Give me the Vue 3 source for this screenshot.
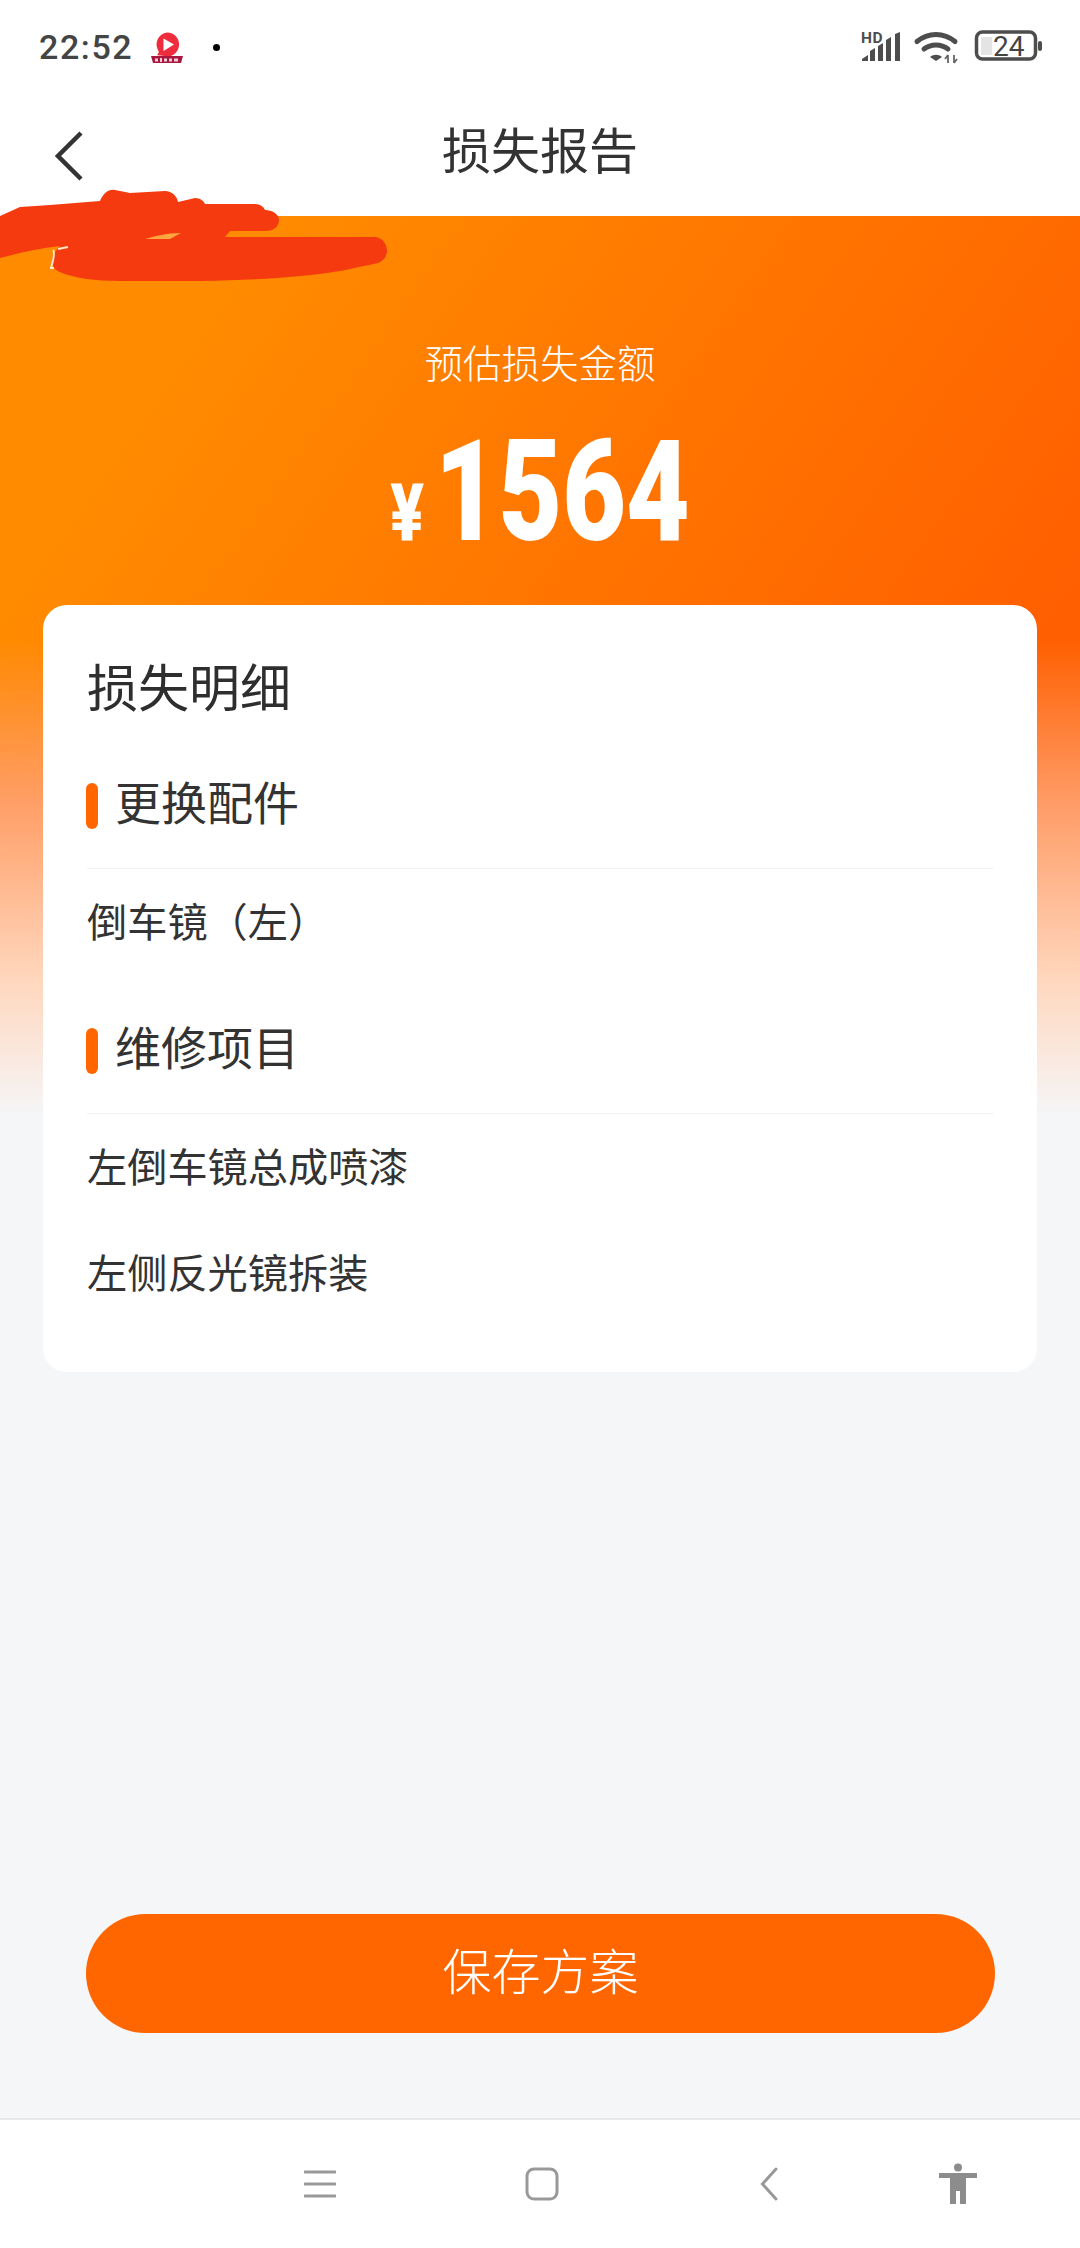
<script setup>
const sections = [
  { title: '更换配件', items: ['倒车镜（左）'] },
  { title: '维修项目', items: ['左倒车镜总成喷漆', '左侧反光镜拆装'] },
]
</script>

<template>
  <div class="page">
    <div class="status">
      <span class="time">22:52</span>
      <svg class="app-logo" width="34" height="32" viewBox="0 0 34 32">
        <path d="M17 0.500a12 12 0 1 1-3 23.600c-2-.5-4.500 0-7-1.100 1.500-1 2-2.500 1.500-4A12 12 0 0 1 17 .5z" fill="#ee2c3c" />
        <path d="M13.500 6.500l10.500 6-10.500 6.500z" fill="#fff" />
        <path d="M1 24h32l-2 7H3z" fill="#a8173f" />
        <path d="M5 26.500h3v3H5zM10 26h2v4h-2zM14 26.500h3v3h-3zM19 26.500h3v3h-3zM24 26.500h4v3h-4z" fill="#f6cdd6" />
      </svg>
      <span class="dot"></span>
      <svg class="status-icons" width="190" height="40" viewBox="0 0 190 40">
        <text x="4" y="13" class="hd">HD</text>
        <path d="M5 31v-2l6-4v6zM13 31V21l5-3v13zM21 31V16l5-3v18zM29 31V10l5-3v24zM38 31V4l5-2v29z" fill="#4d4d4d" />
        <path d="M60 11.500c11-9.500 27-9.500 38 0" fill="none" stroke="#4d4d4d" stroke-width="5" stroke-linecap="round" />
        <path d="M67 19c7-5.500 17-5.500 24 0" fill="none" stroke="#4d4d4d" stroke-width="5" stroke-linecap="round" />
        <path d="M73 27c3.500-3 8.500-3 12 0l-6 4z" fill="#4d4d4d" />
        <path d="M91 33v-8m-3 4l3-4M97 25v8m3-4l-3 4" fill="none" stroke="#666" stroke-width="1.800" />
        <rect x="119.500" y="2" width="59" height="27" rx="6" fill="none" stroke="#4d4d4d" stroke-width="3.500" />
        <rect x="124" y="7" width="11" height="18" fill="#e4e4e4" />
        <rect x="181" y="11" width="4" height="10" rx="2" fill="#4d4d4d" />
        <text x="136" y="26" class="batt">24</text>
      </svg>
    </div>

    <header class="nav-bar">
      <svg class="back" width="30" height="50" viewBox="0 0 30 50">
        <path d="M26 2L3 25l23 23" fill="none" stroke="#333" stroke-width="4.500" />
      </svg>
      <h1 class="title">损失报告</h1>
    </header>

    <main class="main">
      <section class="summary">
        <p class="summary-label">预估损失金额</p>
        <p class="amount"><span class="currency">¥</span><span class="value">1564</span></p>
      </section>

      <section class="card">
        <h2 class="card-title">损失明细</h2>
        <div v-for="s in sections" :key="s.title" class="group">
          <div class="group-head">
            <i class="bar"></i>
            <span class="group-name">{{ s.title }}</span>
          </div>
          <div v-for="item in s.items" :key="item" class="row">{{ item }}</div>
        </div>
      </section>

      <button class="save">保存方案</button>
    </main>

    <nav class="sys-nav">
      <svg class="k-menu" width="32" height="32" viewBox="0 0 32 32">
        <path d="M1 4h30M1 16h30M1 28h30" stroke="#999" stroke-width="3" stroke-linecap="round" />
      </svg>
      <svg class="k-home" width="34" height="34" viewBox="0 0 34 34">
        <rect x="2" y="2" width="30" height="30" rx="7" fill="none" stroke="#999" stroke-width="3" />
      </svg>
      <svg class="k-back" width="18" height="34" viewBox="0 0 18 34">
        <path d="M16 2L2.500 17 16 32" fill="none" stroke="#999" stroke-width="3" stroke-linecap="round" />
      </svg>
      <svg class="k-person" width="38" height="42" viewBox="0 0 38 42">
        <ellipse cx="19" cy="4.500" rx="4" ry="4" fill="#8c8c8c" />
        <path d="M0 10h38v5H27v26h-6V28h-4v13h-6V15H0z" fill="#8c8c8c" />
      </svg>
    </nav>

    <svg class="scribble" width="400" height="110" viewBox="0 180 400 110">
      <path d="M0 216L20 207L50 205L100 201C103 194 108 189 115 190L130 193L165 191C172 191 177 196 178 202L195 198C200 198 204 201 205 204H255C260 204 264 207 265 210C272 210 279 214 279 220C279 228 272 231 265 231H230L225 237H375C383 238 387 244 387 252C386 258 383 261 378 263C355 268 330 274 300 276C270 279 240 280 200 281H120C95 281 75 278 62 273C54 270 52 266 52 260C53 254 56 250 60 246C40 248 20 253 0 258Z" fill="#f53a10" />
      <path d="M145 239C155 236 168 233 181 233L170 239Z" fill="#ffa640" />
      <path d="M53 250C55 252 54 258 51 268M54 268H50M58 249L68 247" fill="none" stroke="#ffe9c8" stroke-width="2" />
    </svg>
  </div>
</template>

<style>
html, body { margin: 0; padding: 0; background: #f5f6f8; }
</style>

<style scoped>
.page {
  position: relative;
  width: 1080px;
  height: 2248px;
  display: flex;
  flex-direction: column;
  background: #f5f6f8;
  overflow: hidden;
  font-family: "Noto Sans CJK SC", "Noto Sans", sans-serif;
  font-weight: 400;
  color: #333;
}

/* status bar */
.status {
  height: 90px;
  flex: none;
  display: flex;
  align-items: flex-start;
  background: #fff;
  padding: 0 0 0 39px;
  box-sizing: border-box;
}
.time {
  margin-top: 26px;
  font: 500 34px/42px Roboto, sans-serif;
  letter-spacing: 1.6px;
  color: #444;
}
.app-logo { margin: 32px 0 0 17px; }
.dot {
  width: 7px;
  height: 7px;
  margin: 44px 0 0 29px;
  border-radius: 50%;
  background: #000;
}
.status-icons { margin: 30px 33px 0 auto; overflow: visible; }
.hd { font: 700 15.5px Roboto, sans-serif; fill: #4d4d4d; letter-spacing: .5px; }
.batt { font: 400 28px Roboto, sans-serif; fill: #444; }

/* navigation bar */
.nav-bar {
  height: 126px;
  flex: none;
  display: flex;
  align-items: center;
  justify-content: center;
  position: relative;
  background: #fff;
  padding-bottom: 10px;
  box-sizing: border-box;
}
.back { position: absolute; left: 55px; top: 41px; }
.title {
  margin: 0;
  font-size: 49px;
  font-weight: inherit;
  line-height: 64px;
  color: #333;
}

/* main */
.main {
  flex: 1;
  display: flex;
  flex-direction: column;
  background:
    linear-gradient(180deg, rgba(255,120,20,0) 47%, rgba(255,160,110,.92) 65%, rgba(255,215,190,1) 85%, #f5f6f8 100%) top / 100% 900px no-repeat,
    linear-gradient(125deg, #ff8c00 15%, #ff5f00 78%) top / 100% 900px no-repeat;
}
.summary {
  height: 389px;
  flex: none;
  box-sizing: border-box;
  padding-top: 120px;
  text-align: center;
  color: #fff;
}
.summary-label {
  margin: 0;
  font-size: 38.5px;
  font-weight: 300;
  line-height: 50px;
}
.amount {
  margin: 21px 0 0;
  height: 170px;
  display: flex;
  justify-content: center;
  align-items: baseline;
  font-family: Roboto, sans-serif;
  font-weight: 900;
  line-height: 170px;
  transform: scaleX(.78);
}
.currency { font-size: 80px; margin-right: 14px; }
.value { font-size: 141px; }

/* card */
.card {
  margin: 0 43px;
  height: 767px;
  flex: none;
  box-sizing: border-box;
  padding: 48px 43px 0 44px;
  background: #fff;
  border-radius: 24px;
}
.card-title {
  margin: 0;
  height: 70px;
  font-size: 51px;
  font-weight: inherit;
  line-height: 64px;
  color: #2e2e2e;
}
.group { margin-top: 53px; }
.card-title + .group { margin-top: 60px; }
.group-head {
  display: flex;
  align-items: center;
  height: 46px;
  padding-bottom: 39px;
  border-bottom: 1px solid #f2f2f2;
  color: #333;
}
.group-name {
  font-size: 46px;
  line-height: 46px;
  margin-bottom: 12px;
}
.bar {
  width: 12px;
  height: 46px;
  margin: 0 17px 0 -1px;
  border-radius: 6px;
  background: #ff6600;
}
.row {
  height: 106px;
  line-height: 102px;
  font-size: 40.2px;
  color: #333;
}

/* button */
.save {
  margin: auto 85px 85px 86px;
  height: 119px;
  flex: none;
  border: 0;
  border-radius: 60px;
  padding: 0 0 10px;
  background: #ff6600;
  color: #fff;
  font-family: inherit;
  font-weight: 300;
  font-size: 49px;
}

/* system nav */
.sys-nav {
  height: 130px;
  flex: none;
  display: flex;
  align-items: center;
  box-sizing: border-box;
  padding: 0 0 0 304px;
  background: #fff;
  border-top: 2px solid #e8e8e8;
}
.k-home { margin-left: 189px; }
.k-back { margin-left: 201px; }
.k-person { margin-left: 161px; }

.scribble { position: absolute; left: 0; top: 180px; }
</style>
